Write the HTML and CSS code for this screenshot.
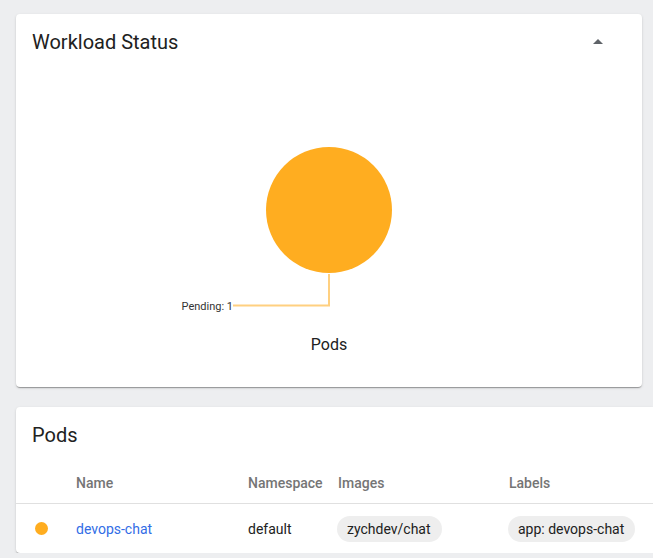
FILE: index.html
```html
<!DOCTYPE html>
<html>
<head>
<meta charset="utf-8">
<link rel="stylesheet" href="styles.css">
</head>
<body>
<div class="page">
  <section class="card card-status">
    <header class="card-header">
      <h2 class="card-title">Workload Status</h2>
      <span class="collapse-icon" aria-hidden="true"></span>
    </header>
    <div class="chart">
      <svg class="chart-svg" width="626" height="260" viewBox="0 0 626 260">
        <circle cx="313" cy="140" r="63" fill="#ffad20"/>
        <polyline points="313,204 313,235.5 217,235.5" fill="none" stroke="#ffd080" stroke-width="2"/>
        <text x="217" y="239.5" text-anchor="end" class="chart-label">Pending: 1</text>
      </svg>
      <div class="chart-caption">Pods</div>
    </div>
  </section>

  <section class="card card-pods">
    <header class="card-header">
      <h2 class="card-title">Pods</h2>
    </header>
    <div class="table">
      <div class="row head">
        <div class="cell status"></div>
        <div class="cell">Name</div>
        <div class="cell">Namespace</div>
        <div class="cell">Images</div>
        <div class="cell">Labels</div>
      </div>
      <div class="row body">
        <div class="cell status"><span class="dot"></span></div>
        <div class="cell"><a class="link">devops-chat</a></div>
        <div class="cell">default</div>
        <div class="cell"><span class="chip">zychdev/chat</span></div>
        <div class="cell"><span class="chip">app: devops-chat</span></div>
      </div>
    </div>
  </section>
</div>
</body>
</html>
```

FILE: styles.css
```css
html, body {
  margin: 0;
  padding: 0;
  background: #edeef0;
  overflow: hidden;
  font-family: Roboto, "Liberation Sans", sans-serif;
  color: #212121;
}

.page {
  padding: 14px 0 0 16px;
  display: flex;
  flex-direction: column;
  gap: 20px;
}

.card {
  background: #fff;
  border-radius: 4px;
  box-shadow: 0 2px 1px -1px rgba(0,0,0,.2), 0 1px 1px 0 rgba(0,0,0,.14), 0 1px 3px 0 rgba(0,0,0,.12);
}

.card-status {
  width: 626px;
}

.card-pods {
  width: 637px;
  border-radius: 4px 0 0 4px;
}

.card-header {
  display: flex;
  align-items: center;
  justify-content: space-between;
  padding: 16px 16px;
  height: 24px;
}

.card-title {
  margin: 0;
  font-size: 20px;
  font-weight: 400;
  line-height: 24px;
  color: #212121;
}

.collapse-icon {
  width: 0;
  height: 0;
  border-left: 5px solid transparent;
  border-right: 5px solid transparent;
  border-bottom: 5px solid #5f6368;
  margin-right: 23px;
  margin-top: -1px;
}

.chart {
  display: flex;
  flex-direction: column;
  align-items: center;
  padding-bottom: 30px;
}

.chart-svg {
  display: block;
}

.chart-label {
  font-family: Roboto, "Liberation Sans", sans-serif;
  font-size: 11px;
  fill: #333;
}

.chart-caption {
  margin-top: 3px;
  font-size: 16px;
  line-height: 24px;
  color: #212121;
}

.table {
  font-size: 14px;
}

.row {
  display: grid;
  grid-template-columns: 60px 172px 90px 171px 144px;
  align-items: center;
}

.row.head {
  height: 40px;
  color: #757575;
  font-weight: 500;
  border-bottom: 1px solid #e0e0e0;
}

.row.body {
  height: 49px;
  color: #212121;
}

.cell {
  white-space: nowrap;
}

.cell.status {
  display: flex;
  padding-left: 19px;
}

.dot {
  width: 13px;
  height: 13px;
  border-radius: 50%;
  background: #ffad20;
}

.link {
  color: #326de6;
  text-decoration: none;
}

.chip {
  display: inline-block;
  background: #eeeeee;
  border-radius: 13px;
  height: 26px;
  line-height: 26px;
  padding: 0 11px 0 10px;
  margin-left: -1px;
  color: #212121;
}
```
